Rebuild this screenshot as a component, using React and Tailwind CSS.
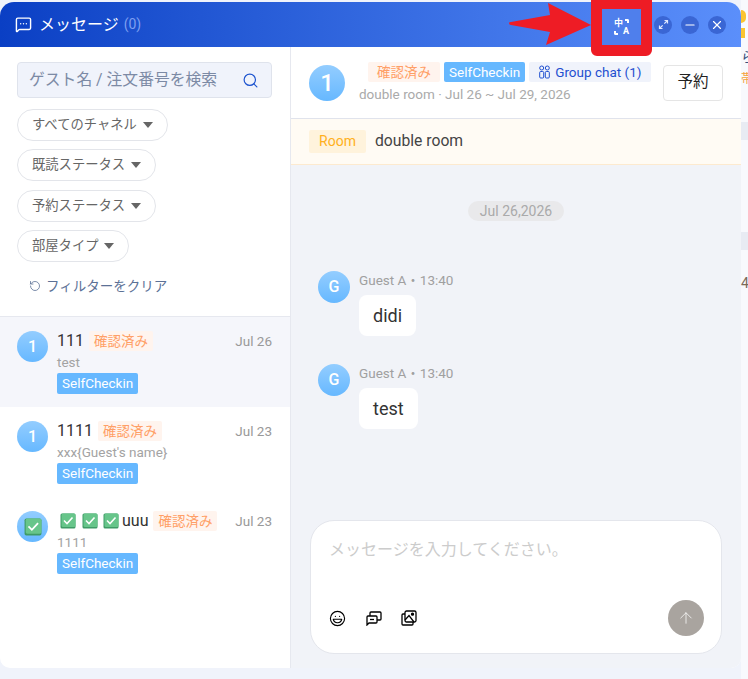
import React from 'react';
import { MessageSquareMore, Search, RotateCcw, ArrowUp, Minus, X, Laugh } from 'lucide-react';

const font = { fontFamily: 'Roboto, "Noto Sans CJK JP", sans-serif' };

function CheckEmoji({ size = 16 }) {
  return (
    <svg width={size} height={size} viewBox="0 0 16 16" className="shrink-0">
      <rect x="0.5" y="0.5" width="15" height="15" rx="1.5" fill="#3f9b66" />
      <rect x="1.5" y="0.5" width="14" height="13.5" rx="1.5" fill="#67c58a" />
      <path d="M4 7.5 L7 10.5 L12.5 4.5" fill="none" stroke="#fff" strokeWidth="1.6" />
    </svg>
  );
}

function Avatar({ children, size = 'w-[31px] h-[31px] text-[16px]' }) {
  return (
    <div className={`${size} rounded-full shrink-0 flex items-center justify-center text-white font-medium bg-gradient-to-b from-[#93cdff] to-[#66b8ff]`}>
      {children}
    </div>
  );
}

function StatusTag({ className = '' }) {
  return <span className={`px-[5px] h-[20px] leading-[20px] rounded-[2px] bg-[#fff4ee] text-[#ff9f66] text-[13.5px] whitespace-nowrap ${className}`}>確認済み</span>;
}

function CheckinTag() {
  return <div className="w-fit mt-[1px] px-[5px] h-[21px] leading-[21px] rounded-[2px] bg-[#66b8ff] text-white text-[13.5px]">SelfCheckin</div>;
}

function FilterPill({ label }) {
  return (
    <div className="self-start h-[32px] px-[14px] flex items-center gap-[6px] rounded-full border border-[#e3e5ea] text-[13.3px] text-[#666]">
      {label}
      <span className="w-0 h-0 border-x-[5px] border-x-transparent border-t-[6px] border-t-[#666]" />
    </div>
  );
}

function ConversationRow({ name, preview, date, avatar, active }) {
  return (
    <div className={`h-[90px] pl-[17px] pr-[18px] pt-[14px] flex gap-[9px] ${active ? 'bg-[#f5f6fb]' : ''}`}>
      <Avatar>{avatar}</Avatar>
      <div className="flex-1 min-w-0">
        <div className="flex items-center h-[20px]">
          <div className="flex items-center gap-[5px] flex-1 text-[16px] text-[#333]">
            {name}
            <StatusTag />
          </div>
          <span className="text-[13.5px] text-[#999]">{date}</span>
        </div>
        <div className="text-[13.5px] leading-[20px] mt-[1px] text-[#a3a3a3]">{preview}</div>
        <CheckinTag />
      </div>
    </div>
  );
}

function Message({ text }) {
  return (
    <div className="flex gap-[9px]">
      <Avatar size="w-[32px] h-[32px] text-[16px]">G</Avatar>
      <div className="-mt-[1px] flex flex-col items-start">
        <div className="text-[13.5px] leading-[20px] text-[#a0a0a0]">Guest A・13:40</div>
        <div className="mt-[5px] h-[41px] px-[14px] flex items-center rounded-[8px] bg-white text-[18px] text-[#333]">{text}</div>
      </div>
    </div>
  );
}

function WindowButton({ children }) {
  return <div className="w-[18px] h-[18px] rounded-full bg-[#3a66d4] flex items-center justify-center text-white">{children}</div>;
}

export default function App() {
  return (
    <div className="relative w-[748px] h-[679px] overflow-hidden bg-[#f0f3fb] flex items-start" style={font}>
      {/* Main window */}
      <div className="w-[741px] h-[666px] mt-[2px] shrink-0 rounded-t-[14px] rounded-b-[10px] overflow-hidden flex flex-col bg-white">
        <header className="h-[45px] shrink-0 pl-[15px] pr-[15px] flex items-center bg-gradient-to-r from-[#0a3fc4] to-[#5b8ffb] text-white">
          <MessageSquareMore size={17} strokeWidth={2} />
          <span className="ml-[7px] text-[16px]">メッセージ</span>
          <span className="ml-[5px] text-[14px] text-[#7f9ff0]">(0)</span>
          <div className="ml-auto flex items-center gap-[9px]">
            <WindowButton>
              <svg width="11" height="11" viewBox="0 0 11 11" fill="none" stroke="#dfe8ff" strokeWidth="1.2">
                <path d="M6.5 1.5 H9.5 V4.5 M9.5 1.5 L6.3 4.7 M4.5 9.5 H1.5 V6.5 M1.5 9.5 L4.7 6.3" />
              </svg>
            </WindowButton>
            <WindowButton><Minus size={14} strokeWidth={2} /></WindowButton>
            <WindowButton><X size={14} strokeWidth={2} /></WindowButton>
          </div>
        </header>

        <div className="flex-1 flex min-h-0">
          {/* Left column */}
          <aside className="w-[291px] shrink-0 border-r border-[#e6e8ef] flex flex-col">
            <div className="px-[17px] pt-[15px] pb-[20px] border-b border-[#e6e8ef] flex flex-col gap-[8.5px]">
              <div className="w-[255px] h-[36px] pl-[11px] pr-[12px] mb-[2px] flex items-center justify-between rounded-[4px] border border-[#dfe3ec] bg-[#f0f3fb] text-[15.8px] text-[#7c8aa5]">
                ゲスト名 / 注文番号を検索
                <Search size={17} strokeWidth={1.7} className="text-[#1f55cf]" />
              </div>
              <FilterPill label="すべてのチャネル" />
              <FilterPill label="既読ステータス" />
              <FilterPill label="予約ステータス" />
              <FilterPill label="部屋タイプ" />
              <div className="flex items-center gap-[5px] pl-[12px] pt-[5.5px] text-[13.5px] leading-[20px] text-[#5c7196]">
                <RotateCcw size={12} strokeWidth={1.6} />
                フィルターをクリア
              </div>
            </div>
            <ConversationRow active name="111" preview="test" date="Jul 26" avatar="1" />
            <ConversationRow name="1111" preview="xxx{Guest's name}" date="Jul 23" avatar="1" />
            <ConversationRow
              name={<span className="flex items-center gap-[6px] pl-[3px]"><CheckEmoji /><CheckEmoji /><span className="-ml-[1px] flex items-center gap-[3px]"><CheckEmoji />uuu</span></span>}
              preview="1111"
              date="Jul 23"
              avatar={<CheckEmoji size={18} />}
            />
          </aside>

          {/* Chat column */}
          <main className="flex-1 min-w-0 flex flex-col bg-[#f1f3f8]">
            <div className="h-[72px] shrink-0 bg-white border-b border-[#e0e3ec] pl-[18px] pr-[18px] flex items-center">
              <Avatar size="w-[36px] h-[36px] text-[24px] font-bold">1</Avatar>
              <div className="ml-[14px] flex-1 pt-[1px]">
                <div className="flex items-center gap-[4px] ml-[9px]">
                  <StatusTag className="px-[9px]" />
                  <span className="inline-block px-[5px] h-[20px] leading-[20px] rounded-[2px] bg-[#66b8ff] text-white text-[13.5px]">SelfCheckin</span>
                  <span className="h-[20px] px-[10px] flex items-center gap-[5px] rounded-[2px] bg-[#f0f3fb] text-[#1f4fd0] text-[13.5px]">
                    <svg width="11" height="14" viewBox="0 0 11 14" fill="none" stroke="currentColor" strokeWidth="1">
                      <circle cx="2.7" cy="3" r="2" /><circle cx="8.3" cy="3" r="2" />
                      <rect x="0.7" y="6.5" width="4" height="6.5" rx="1" /><rect x="6.3" y="6.5" width="4" height="6.5" rx="1" />
                    </svg>
                    Group chat (1)
                  </span>
                </div>
                <div className="mt-[2px] text-[13.5px] leading-[20px] text-[#aaa]">double room · Jul 26 ~ Jul 29, 2026</div>
              </div>
              <div className="w-[60px] h-[36px] flex items-center justify-center rounded-[4px] border border-[#e5e5e5] text-[15.5px] text-[#222]">予約</div>
            </div>
            <div className="h-[46px] shrink-0 pl-[18px] flex items-center gap-[9px] bg-[#fffbf4] border-b border-[#fdeacf]">
              <span className="w-[57px] h-[23px] flex items-center justify-center rounded-[2px] bg-[#fff3dc] text-[#ffb020] text-[14px]">Room</span>
              <span className="text-[15.7px] text-[#444] -mt-[1px]">double room</span>
            </div>

            <div className="flex-1 min-h-0 flex flex-col">
              <div className="mt-[36px] self-center w-[96px] h-[20px] flex items-center justify-center rounded-full bg-[#e9e9eb] text-[14px] text-[#aaa]">Jul 26,2026</div>
              <div className="mt-[50px] pl-[27px] flex flex-col gap-[28px]">
                <Message text="didi" />
                <Message text="test" />
              </div>
            </div>

            <div className="shrink-0 mx-[19px] mb-[14px] h-[134px] rounded-[24px] border border-[#e4e6ec] bg-white flex flex-col justify-between pl-[18px] pr-[17px] pt-[18px] pb-[17px]">
              <div className="text-[16px] leading-[22px] text-[#ccc]">メッセージを入力してください。</div>
              <div className="flex items-center justify-between">
                <div className="flex items-center gap-[19.5px] text-black">
                  <Laugh size={17} strokeWidth={1.6} />
                  <svg width="16" height="16" viewBox="0 0 16 16" fill="none" stroke="currentColor" strokeWidth="1.3">
                    <path d="M1 7 a1 1 0 0 1 1-1 H10 a1 1 0 0 1 1 1 V12 a1 1 0 0 1-1 1 H3 L1 15 Z" />
                    <path d="M4 6 V3 a1 1 0 0 1 1-1 H14 a1 1 0 0 1 1 1 V9 a1 1 0 0 1-1 1 H11" />
                    <path d="M4 9.5 H8" />
                  </svg>
                  <svg width="16" height="16" viewBox="0 0 16 16" fill="none" stroke="currentColor" strokeWidth="1.3">
                    <rect x="4" y="1" width="11" height="11" rx="1.5" />
                    <path d="M4 4 H2 a1 1 0 0 0-1 1 V14 a1 1 0 0 0 1 1 H11 a1 1 0 0 0 1-1 V12" />
                    <path d="M4 10 L8 5.5 L13 12" />
                    <circle cx="11.5" cy="4.2" r="1" fill="currentColor" />
                  </svg>
                </div>
                <div className="w-[36px] h-[36px] rounded-full bg-[#a9a49f] flex items-center justify-center text-white">
                  <ArrowUp size={18} strokeWidth={1} />
                </div>
              </div>
            </div>
          </main>
        </div>
      </div>

      {/* Page peeking out behind the window */}
      <div className="w-[7px] h-[679px] shrink-0 overflow-hidden bg-[#f8f9fd] flex flex-col">
        <div className="mt-[10px] h-[13px] w-[5px] rounded-r-full bg-[#fbc531]" />
        <div className="mt-[5px] h-[10px] w-[4px] bg-[#fbc531]" />
        <div className="mt-[10px] h-[18px] text-[14px] leading-[18px] text-[#35507e] whitespace-nowrap">ら</div>
        <div className="mt-[5px] h-[16px] text-[12px] leading-[16px] text-[#f5a13c] whitespace-nowrap">帯</div>
        <div className="mt-[35px] h-[18px] bg-[#e8ebf3]" />
        <div className="mt-[92px] h-[18px] bg-[#e8ebf3]" />
        <div className="mt-[23px] h-[20px] text-[14px] leading-[20px] text-[#7a6a58]">4</div>
      </div>

      {/* Red annotation over the screenshot */}
      <div className="absolute left-[591px] top-0 w-[61px] h-[56px] rounded-b-[6px] border-x-[11px] border-t-[9px] border-b-[11px] border-[#ee1c25] bg-[#4f7fec] flex items-center justify-center">
        <div className="relative -mt-[1px] w-[15px] h-[16px] text-white font-bold text-[9px] leading-[8px]">
          <span className="absolute left-0 top-0">中</span>
          <span className="absolute right-0 bottom-0">A</span>
          <span className="absolute right-0 top-0 w-[4px] h-[4px] border-t-2 border-r-2 border-white rounded-tr-[2px]" />
          <span className="absolute left-0 bottom-0 w-[4px] h-[4px] border-b-2 border-l-2 border-white rounded-bl-[2px]" />
        </div>
      </div>
      <svg className="absolute left-[505px] top-0" width="90" height="50" viewBox="0 0 90 50">
        <path d="M4 23 Q4 22 6 22 L45 15 L43 3 L86 25 L41 45 L45 32 L6 25 Q4 25 4 23 Z" fill="#ee1c25" />
      </svg>
    </div>
  );
}
